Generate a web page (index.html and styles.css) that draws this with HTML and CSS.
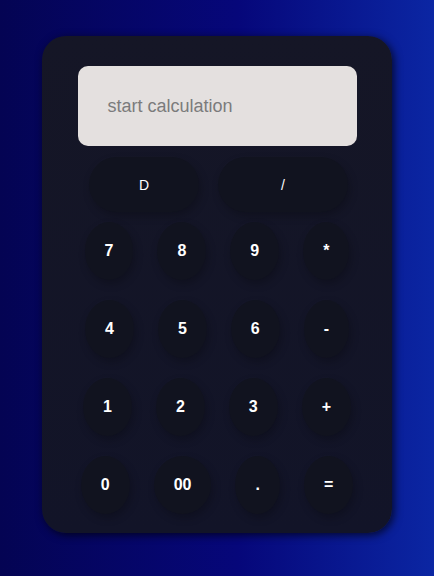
FILE: index.html
```html
<!DOCTYPE html>
<html>
<head>
<meta charset="utf-8">
<link rel="stylesheet" href="styles.css">
</head>
<body>
<div class="calc">
  <div class="display"><span class="placeholder">start calculation</span></div>
  <div class="row top-row">
    <button class="key pill pill-d">D</button>
    <button class="key pill pill-div">/</button>
  </div>
  <div class="keys">
    <div class="row"><button class="key">7</button><button class="key">8</button><button class="key">9</button><button class="key">*</button></div>
    <div class="row"><button class="key">4</button><button class="key">5</button><button class="key">6</button><button class="key">-</button></div>
    <div class="row"><button class="key">1</button><button class="key">2</button><button class="key">3</button><button class="key">+</button></div>
    <div class="row"><button class="key">0</button><button class="key">00</button><button class="key">.</button><button class="key">=</button></div>
  </div>
</div>
</body>
</html>
```

FILE: styles.css
```css
html, body {
  margin: 0;
  padding: 0;
  height: 100%;
}
body {
  background: linear-gradient(to right, #040453 0%, #06077a 55%, #0b26a3 100%);
  font-family: "Liberation Sans", Arial, sans-serif;
  padding-top: 36px;
  box-sizing: border-box;
}
.calc {
  width: 350px;
  height: 497px;
  margin: 0 auto;
  box-sizing: border-box;
  padding: 30px 36px 19px;
  background: linear-gradient(to bottom, #151626, #121428);
  border-radius: 24px;
  box-shadow: 2px 2px 8px rgba(0, 0, 0, 0.7);
  display: flex;
  flex-direction: column;
  align-items: center;
}
.display {
  width: 279px;
  height: 80px;
  flex-shrink: 0;
  background: #e4e0df;
  border-radius: 10px;
  box-sizing: border-box;
  padding-left: 30px;
  display: flex;
  align-items: center;
  margin-bottom: 11px;
}
.placeholder {
  color: #7b7b7c;
  font-size: 18px;
}
.row {
  display: flex;
  justify-content: center;
  gap: 24px;
}
.top-row {
  gap: 19px;
  margin-bottom: 10px;
  margin-left: 3px;
}
.keys {
  display: flex;
  flex-direction: column;
  gap: 20px;
}
.key {
  font-family: "Liberation Sans", Arial, sans-serif;
  font-size: 16px;
  font-weight: bold;
  line-height: 18px;
  color: #ffffff;
  background: #11131f;
  border: none;
  padding: 20px;
  margin: 0;
  border-radius: 50%;
  box-shadow: 2px 4px 9px rgba(0, 0, 0, 0.22), -1px -2px 4px rgba(255, 255, 255, 0.012);
}
.pill {
  height: 55px;
  padding: 0;
  font-size: 14px;
  font-weight: normal;
  border-radius: 28px;
}
.pill-d {
  width: 110px;
}
.pill-div {
  width: 130px;
}
```
